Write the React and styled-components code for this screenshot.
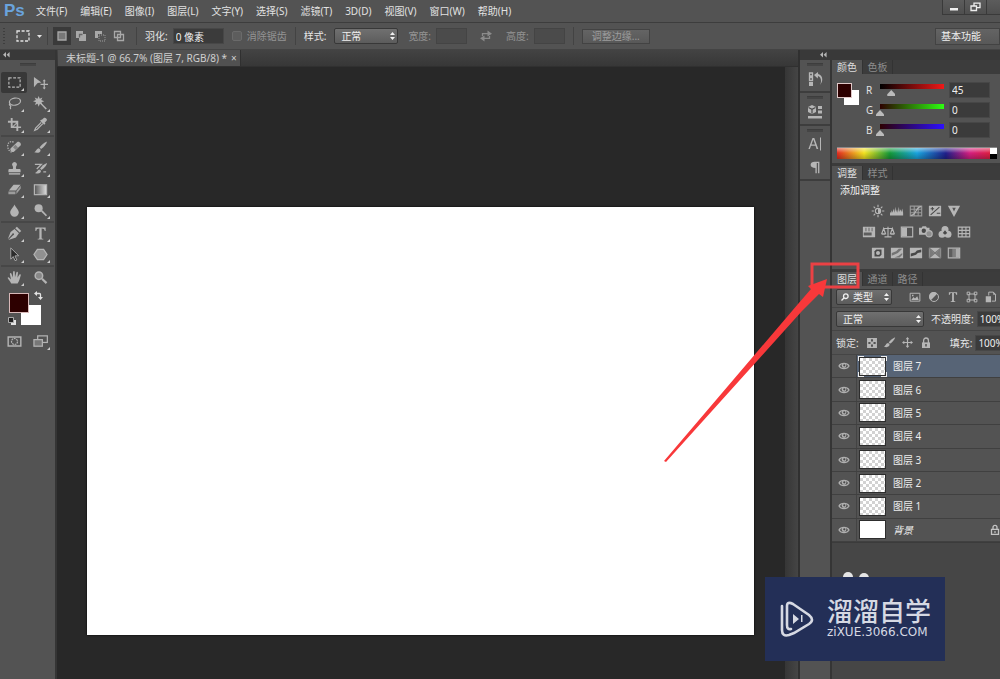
import React from 'react';
import styled, { createGlobalStyle, css } from 'styled-components';

const GlobalStyle = createGlobalStyle`
  * { box-sizing: border-box; }
  body {
    margin: 0;
    background: #444;
    color: #e2e2e2;
    font: 10px/14px "Noto Sans", "Noto Sans CJK SC", sans-serif;
  }
  button, input, select { font: inherit; color: inherit; margin: 0; padding: 0; border: 0; background: none; border-radius: 0; }
  ul { list-style: none; margin: 0; padding: 0; }
`;

/* ---------- icons ---------- */

const Svg = styled.svg`
  display: block;
  flex: none;
  width: ${p => p.$w || 16}px;
  height: ${p => p.$h || 16}px;
  fill: currentColor;
  stroke: none;
  .l { fill: none; stroke: currentColor; stroke-width: 1.3; }
  .d { fill: #484848; }
  .dl { fill: none; stroke: #484848; stroke-width: 1.2; }
`;

const Eye = () => (
  <Svg $w={12} $h={10} viewBox="0 0 12 10">
    <path className="l" d="M1 5C3 1.6 9 1.6 11 5C9 8.4 3 8.4 1 5Z" />
    <circle cx="6" cy="4.6" r="2.3" /><circle className="d" cx="6.3" cy="4.3" r="1.1" />
  </Svg>
);
const Lock = () => (
  <Svg $w={10} $h={12} viewBox="0 0 10 12">
    <path className="l" d="M2.6 6V3.4a2.4 2.4 0 0 1 4.8 0V6" />
    <path d="M1 5.4h8V11H1z" /><path className="d" d="M4.3 7h1.4v2.4H4.3z" />
  </Svg>
);
const OpenLock = () => (
  <Svg $w={10} $h={12} viewBox="0 0 10 12">
    <path className="l" d="M3 5V3.4a2 2 0 0 1 4 0V5M1.5 5.4h7v5h-7z" /><path d="M4.4 7h1.2v2H4.4z" />
  </Svg>
);
const Chevrons = () => (
  <Svg $w={7} $h={6} viewBox="0 0 7 6"><path d="M3 0v5.6L0 2.8zM6.6 0v5.6L3.6 2.8z" /></Svg>
);
const Swap = () => (
  <Svg $w={12} $h={12} viewBox="0 0 12 12">
    <path className="l" d="M2.500 6V3.700H8M9.500 6v2.300H4" /><path d="M7.500 .6L12 3.700 7.500 6.400zM4.500 5.600L0 8.300l4.500 3.100z" />
  </Svg>
);
const Marquee = () => (
  <Svg viewBox="0 0 16 16"><rect className="l" x="2" y="3" width="12" height="10" strokeDasharray="3 1.6" /></Svg>
);

const TOOLS = {
  marquee: <rect className="l" x="2" y="3" width="12" height="10" strokeDasharray="3 1.6" />,
  move: <><path d="M1 2l8 6-4 .4L1 13z" /><path className="l" d="M12 6v8M8 10h8" /><path d="M12 4.600l1.700 2h-3.400zM12 15.400l1.700-2h-3.400z" /></>,
  lasso: <><ellipse className="l" cx="8.500" cy="6" rx="6" ry="3.700" transform="rotate(-10 8.500 6)" /><path className="l" d="M3 8c-1.500 2 1.500 2 1 3.200S3 12.500 4 14" /></>,
  wand: <><path d="M6 0l1.200 3L10 1.500 8.800 4.300 12 5.500 9 6.600l1.200 2.900L7.400 8.200 6 11.500 4.900 8.300 2 9.500l1.200-2.900L0 5.500l3.100-1.200L1.800 1.500l3 1.400z" /><path d="M8.300 7l6.500 6.200-1.300 1.300L7.500 8z" /></>,
  crop: <path d="M4 1h2v3h6v6h3v1.800h-3V15h-2v-3.200H4V6H1V4h3zm2 5v3.900L9.800 6zm4.200 1.200L7.300 10h2.900z" />,
  dropper: <><path d="M9.500 3l2-2c1.600-1.200 4.300 1.300 3 3l-2 2 .8 1-1.300 1.200L7.500 4 8.700 2.800z" /><path className="l" d="M8.800 5.700l-6 6-1 2.600L4.500 13l6-6" /></>,
  heal: <><path d="M4 8.700l7-6.500c1.800-1.400 5 1.800 3.400 3.700l-7 6.500C5.500 13.800 2.400 10.700 4 8.700z" /><path className="d" d="M6.400 7.600l2.800 2.900 2.600-2.500-2.800-2.900z" opacity=".45" /><path className="l" d="M7 2.500C3.500 0 .3 3.500 .8 7c.3 3 1.500 5 4.200 6" strokeDasharray="1.500 1.200" /></>,
  brush: <><path d="M15 1.500c-3 1-6.500 4-8 6.500l1.600 1.500C11.500 7.500 14.500 4.500 15 1.500z" /><path d="M6.300 8.700l1.800 1.600c.2 3.500-4 4.200-7.100 2.600 2.500-.3 2.400-4 5.300-4.200z" /></>,
  stamp: <><path d="M8 1a2.700 2.700 0 0 1 2 4.400c-.7 1-.6 2-.2 3H13c1 0 1.500.6 1.500 1.200V12h-13V9.600c0-.7.5-1.200 1.500-1.200h3.200c.4-1 .5-2-.2-3A2.700 2.700 0 0 1 8 1z" /><path d="M2 13h12v1.500H2z" /></>,
  history: <><path d="M15 2c-3 1-6 3.500-7.500 6l1.500 1.500C12 7.500 14.500 5 15 2z" /><path d="M7 9l1.500 1.500c.2 3-3.500 3.700-6.500 2.200 2.300-.2 2.500-3.500 5-3.700z" /><path className="l" d="M2 3.500h7L4 8.500M11 11.500h3" /></>,
  eraser: <><path d="M7 3h7.500l-5 6H2z" /><path d="M1.500 10H9v3H1.500zM10 9.600l4.700-5.700v3L10 12.800z" opacity=".75" /></>,
  gradient: <><defs><linearGradient id="toolGradient"><stop stopColor="#555" /><stop offset="1" stopColor="#ddd" /></linearGradient></defs><rect className="l" x="1.500" y="3" width="13" height="10.500" style={{ fill: 'url(#toolGradient)' }} /></>,
  blur: <path d="M8 1.500c1 3 4.600 5.500 4.600 8.700A4.500 4.500 0 0 1 8 14.600a4.500 4.500 0 0 1-4.600-4.400C3.400 7 7 4.500 8 1.500z" />,
  dodge: <><circle cx="6" cy="5.500" r="4.300" /><path d="M8.500 9L10 7.700l5 5.300-1.300 1.200z" /></>,
  pen: <><path d="M10.500.8l4.700 4.400-1.700 1.700-4.700-4.400z" /><path d="M8 3.300l4.700 4.400-3.200 4.500L1.500 15l5-5.200a1 1 0 1 0-1-1L.8 14.200 3.800 6.500z" /></>,
  type: <path d="M2.500 1.500h11v3.700h-1c-.3-1.800-1-2.500-3.300-2.500v9.800c0 1 .6 1.200 1.800 1.200v.8H5v-.8c1.200 0 1.800-.2 1.800-1.200V2.700c-2.300 0-3 .7-3.300 2.500h-1z" />,
  select: <path d="M4 1l8.500 8.300-4 .2 2 4.300-1.900.8-2-4.400L4 13z" style={{ fill: '#2c2c2c', stroke: '#aaa' }} />,
  shape: <path className="l" d="M4.700 2.500h6.600L15 8l-3.700 5.500H4.700L1 8z" style={{ fill: '#909090' }} />,
  hand: <path d="M4.500 14.500C3.500 12 1.500 10.500.7 8.600c0-1 1.300-1 2 0l1.600 1.600L3 4.200c0-1.300 1.500-1.400 1.800-.2l1.400 4L6.500 2c.2-1.200 1.700-1.200 1.800 0l.2 5.600L10 2.600c.4-1.200 1.700-.9 1.700.3l-.6 5.300 2-3.200c.7-1 1.900-.4 1.600.7-1 3.500-1.700 6.200-3.400 8.800z" />,
  zoom: <><circle cx="6.300" cy="6" r="4" style={{ fill: '#888', stroke: 'currentColor', strokeWidth: 1.600 }} /><path d="M8.800 10l1.600-1.500 4.800 4.600-1.600 1.700z" /></>,
  mask: <><path d="M.5 2.500h15v11H.500zM2 4v8h12V4z" fillRule="evenodd" /><circle className="l" cx="8" cy="8" r="3.200" strokeDasharray="2 .8" /></>,
  screen: <><rect className="l" x="5" y="2" width="10.300" height="7" /><rect className="l" x="1" y="6" width="9" height="7" style={{ fill: '#777' }} /></>,
};

const ADJUST = {
  brightness: <><circle className="l" cx="8" cy="8" r="3" /><path d="M8 5a3 3 0 0 1 0 6z" /><path className="l" d="M8 .8v2.500M8 12.700v2.500M.8 8h2.500M12.700 8h2.500M3 3l1.700 1.700M11.300 11.300L13 13M13 3l-1.700 1.700M4.700 11.300L3 13" /></>,
  levels: <path d="M0 13v-3l1-1v2l1-4 1 3 1-5 1 5 1-7 1 6 1-3 1 4 1-7 1 6 1-3 1 3 1-4 1 5v3z" />,
  curves: <><path className="l" d="M1.500 2.500h13v11h-13zM6 2.500v11M10.500 2.500v11M1.500 6h13M1.500 10h13" strokeWidth="1" opacity=".7" /><path className="l" d="M2 13C9 13 7 3 14 3" /></>,
  exposure: <><path d="M1 2h14v12H1z" /><path className="dl" d="M13 3.500L3 12.500M3 5.500h4M10 10.500h4M5 3.500v4" /></>,
  vibrance: <path d="M1 2h14L8 14.800zm5 2.200L8 8.500l2-4.300z" fillRule="evenodd" />,
  hue: <><path d="M1 2h14v12H1z" /><path className="d" d="M4 3h1v4H4zM7.500 3h1v4h-1zM11 3h1v4h-1zM2 8.500h9v3.500H2z" opacity=".8" /></>,
  balance: <path className="l" d="M8 2v11M4 13.500h8M3 4h10M3 4L.8 10h4.400zM13 4l-2.200 6h4.400zM1 10.500h4M11 10.500h4" />,
  bw: <><path className="l" d="M1.500 2.500h13v11h-13z" /><path d="M2 3h6v10H2z" /></>,
  photo: <><path d="M0 3h3l1-1.500h4L9 3h3v8H0z" /><circle className="d" cx="5.500" cy="6.500" r="2.500" /><circle className="l" cx="11.500" cy="10" r="3.600" style={{ fill: '#8f8f8f' }} /></>,
  mixer: <><circle cx="8" cy="5" r="4" /><circle cx="4.600" cy="10.500" r="4" /><circle cx="11.400" cy="10.500" r="4" /><path className="d" d="M8 6l2.500 3L8 11 5.500 9z" /></>,
  lookup: <path className="l" d="M1.500 2.500h13v11h-13zM5.800 2.500v11M10.200 2.500v11M1.500 6.200h13M1.500 9.800h13" />,
  invert: <><path d="M1 2h14v12H1z" /><path className="d" d="M12 4v6l-2 2H4V6l2-2z" /><circle cx="8" cy="8" r="2.300" /></>,
  posterize: <><path d="M1 2h14v12H1z" /><path className="d" d="M2 8l5-2 3-3h4L9 8l-7 3zM5 13l5-2 4-3v2l-3 3z" opacity=".6" /></>,
  threshold: <><path d="M1 2h14v12H1z" /><path className="d" d="M2 8.500l5-1 2-2.500 5-1v3l-4 1-2 2-6 2z" /></>,
  selective: <><path d="M1 2h14v12H1z" /><path className="d" d="M1.500 3L7 8l-5.500 5zM14.500 3L9 8l5.500 5z" opacity=".55" /><path className="dl" d="M1.500 2.500l13 11M14.500 2.500l-13 11" opacity=".6" /></>,
  map: <><path className="l" d="M1.500 2.500h13v11h-13z" /><path d="M2 3h4v10H2z" opacity=".1" /><path d="M6 3h4v10H6z" opacity=".45" /><path d="M10 3h4v10h-4z" opacity=".9" /></>,
};

const FILTERS = [
  ['像素图层', <><path className="l" d="M1.500 3h13v10.500h-13z" /><path d="M3 12l3-4 2 2 3-3 2 5zM4 5h2v2H4z" /></>],
  ['调整图层', <><circle className="l" cx="8" cy="8" r="6" /><path d="M12.200 3.800A6 6 0 1 0 3.800 12.200z" /></>],
  ['文字图层', TOOLS.type],
  ['形状图层', <path className="l" d="M4 4h8v8H4zM1.500 1.500H5V5H1.500zM11 1.500h3.500V5H11zM1.500 11H5v3.500H1.500zM11 11h3.500v3.500H11z" />],
  ['智能对象', <><path className="l" d="M5 6V1.500h6l3 3v9H9" /><path d="M1 7h7v8H1zM11 1v4h4z" /></>],
];

/* ---------- shared controls ---------- */

const SelectBox = styled.span`
  position: relative;
  display: flex;
  flex: none;
  width: ${p => p.$w}px;
  height: 16px;
  color: #f0f0f0;
  > svg { position: absolute; right: 3px; top: 4px; pointer-events: none; }
`;
const NativeSelect = styled.select`
  appearance: none;
  width: 100%;
  padding-left: ${p => (p.$search ? 16 : 6)}px;
  border: 1px solid #383838;
  border-radius: 2px;
  background: linear-gradient(#707070, #5c5c5c);
  line-height: 14px;
`;
const SearchGlyph = styled.span`
  position: absolute;
  left: 5px;
  top: 4px;
`;
const Select = ({ w, label, value, search }) => (
  <SelectBox $w={w}>
    <NativeSelect aria-label={label} defaultValue={value} $search={search}>
      <option>{value}</option>
    </NativeSelect>
    {search && (
      <SearchGlyph><Svg $w={8} $h={8} viewBox="0 0 8 8"><circle className="l" cx="4.800" cy="3.200" r="2.300" /><path className="l" d="M3.200 4.800L.5 7.500" /></Svg></SearchGlyph>
    )}
    <Svg $w={5} $h={8} viewBox="0 0 5 8"><path d="M2.500 0L5 3H0zM2.500 8L0 5h5z" /></Svg>
  </SelectBox>
);

const Field = styled.input`
  flex: none;
  width: ${p => p.$w}px;
  height: 16px;
  padding-left: 2px;
  background: #3b3b3b;
  border: 1px solid #474747;
  color: #efefef;
  &:disabled { background: #4b4b4b; border-color: #444; }
`;
const Divider = styled.span`
  flex: none;
  width: 1px;
  height: 18px;
  margin: 0 ${p => p.$m || 8}px;
  background: #434343;
`;
const IconButton = styled.button`
  display: grid;
  place-items: center;
  flex: none;
  width: ${p => p.$w || 19}px;
  height: ${p => p.$h || 21}px;
  color: #b6b6b6;
`;

/* ---------- menu and options bars ---------- */

const Window = styled.div`
  position: relative;
  display: flex;
  flex-direction: column;
  min-height: 100vh;
  overflow: hidden;
`;
const MenuBar = styled.header`
  display: flex;
  align-items: flex-start;
  height: 23px;
  background: #535353;
  border-bottom: 1px solid #3d3d3d;
  overflow: hidden;
`;
const Logo = styled.strong`
  width: 30px;
  padding-left: 4px;
  color: #6aa3dc;
  font: bold 17px/22px "Liberation Sans", sans-serif;
`;
const Menus = styled.nav`
  display: flex;
  flex: 1;
  gap: 1px;
  button { padding: 4px 6px; white-space: nowrap; }
`;
const WindowButtons = styled.div`
  display: flex;
  color: #eee;
  button { width: 22px; height: 15px; display: grid; place-items: center; border: 1px solid #3a3a3a; border-width: 0 0 1px 1px; background: linear-gradient(#5c5c5c, #4f4f4f); }
  button:last-child { width: 14px; }
`;
const OptionsBar = styled.section`
  display: flex;
  align-items: center;
  height: 27px;
  padding-left: 3px;
  background: #535353;
  border-bottom: 1px solid #444;
  white-space: nowrap;
  overflow: hidden;
`;
const Grip = styled.span`
  flex: none;
  width: 2px;
  height: 16px;
  margin-right: 10px;
  background: repeating-linear-gradient(#3e3e3e 0 1px, #535353 1px 3px);
`;
const Modes = styled.div`
  display: flex;
  gap: 1px;
  color: #a8a8a8;
  button { width: 18px; height: 18px; display: grid; place-items: center; }
  button:first-child { background: #3a3a3a; }
`;
const Caption = styled.label`
  display: flex;
  align-items: center;
  gap: ${p => p.$gap || 5}px;
  color: ${p => (p.$dim ? '#939393' : '#e6e6e6')};
`;
const Check = styled.input`
  appearance: none;
  width: 10px;
  height: 10px;
  border: 1px solid #6a6a6a;
  border-radius: 2px;
  background: #5d5d5d;
`;
const SwapSlot = styled.span`
  padding: 0 14px 0 13px;
  color: #8b8b8b;
`;
const RaisedButton = styled.button`
  flex: none;
  width: ${p => p.$w}px;
  height: ${p => p.$h || 15}px;
  border: 1px solid #434343;
  background: linear-gradient(#646464, #585858);
  color: ${p => (p.$dim ? '#9c9c9c' : '#f0f0f0')};
  line-height: 12px;
  text-align: ${p => (p.$dim ? 'center' : 'left')};
  padding-left: ${p => (p.$dim ? 0 : 5)}px;
`;
const Spacer = styled.span`flex: 1;`;

/* ---------- toolbox ---------- */

const Body = styled.main`
  display: flex;
  flex: 1;
`;
const Collapse = styled.div`
  display: flex;
  align-items: center;
  justify-content: ${p => p.$end ? 'flex-end' : 'flex-start'};
  height: 10px;
  padding: 0 3px;
  background: #393939;
  color: #b5b5b5;
`;
const Toolbox = styled.aside`
  flex: none;
  width: 57px;
  background: #535353;
  border-right: 2px solid #353535;
`;
const GripBar = styled.div`
  width: 16px;
  height: 3px;
  margin: 3px auto ${p => p.$mb || 0}px;
  background: #454545;
  border-top: 1px solid #3d3d3d;
`;
const ToolGroup = styled.div`
  display: grid;
  grid-template-columns: 26px 26px;
  margin: 0 1px;
  border-bottom: ${p => (p.$last ? 0 : 2)}px solid #474747;
`;
const Tool = styled.button`
  position: relative;
  display: grid;
  place-items: center;
  height: 21px;
  color: #b4b4b4;
  border-radius: 2px;
  ${p => p.$active && css`background: #383838;`}
  ${p => p.$more && css`
    &::after { content: ""; position: absolute; right: 3px; bottom: 2px; border: solid transparent; border-width: 0 0 3px 3px; border-bottom-color: #ccc; }
  `}
`;
const Swatches = styled.div`
  position: relative;
  height: 40px;
  margin: 3px 0 0 7px;
  svg { position: absolute; }
  .swap { left: 27px; top: 0; }
  .reset { left: 1px; top: 26px; }
`;
const Chip = styled.span`
  position: absolute;
  width: ${p => p.$s}px;
  height: ${p => p.$s}px;
  left: ${p => p.$x}px;
  top: ${p => p.$x}px;
  background: ${p => p.$c};
  border: 1px solid ${p => p.$edge || '#fff'};
`;

/* ---------- document ---------- */

const Doc = styled.section`
  flex: 1;
  min-width: 0;
  display: flex;
  flex-direction: column;
  border-right: 2px solid #303030;
`;
const TabStrip = styled.div`
  display: flex;
  height: 17px;
  padding-left: 1px;
  background: linear-gradient(#434343, #373737);
  border-bottom: 1px solid #303030;
`;
const DocTab = styled.div`
  display: flex;
  align-items: center;
  gap: 4px;
  padding: 0 3px 0 8px;
  background: #515151;
  color: #cfcfcf;
  white-space: nowrap;
  border-right: 1px solid #303030;
`;
const Pasteboard = styled.div`
  flex: 1;
  display: flex;
  background: #282828;
`;
const PageArea = styled.div`
  flex: 1;
  display: flex;
  padding: 140px 31px 44px 30px;
`;
const Page = styled.div`
  flex: 1;
  background: #fff;
  box-shadow: 0 0 2px #000;
`;
const ScrollTrack = styled.div`
  width: 13px;
  background: linear-gradient(90deg, #363636, #454545);
`;

/* ---------- dock and panels ---------- */

const Dock = styled.aside`
  display: flex;
  flex: none;
  flex-direction: column;
  width: 200px;
  background: #464646;
`;
const DockHead = styled.div`
  background: #393939;
  > div { width: 30px; }
`;
const DockRow = styled.div`
  display: flex;
  flex: 1;
`;
const IconColumn = styled.div`
  width: 30px;
  background: #535353;
`;
const DockGroup = styled.div`
  display: flex;
  flex-direction: column;
  align-items: center;
  height: ${p => p.$h}px;
  border-bottom: 2px solid #3d3d3d;
`;
const Panels = styled.div`
  width: 170px;
  border-left: 2px solid #353535;
  overflow: hidden;
`;
const Panel = styled.section`
  background: #535353;
  border-bottom: ${p => p.$edge || 3}px solid #3b3b3b;
  overflow: hidden;
  ${p => p.$h && css`height: ${p.$h}px;`}
`;
const PanelTabs = styled.div`
  display: flex;
  height: 14px;
  background: #3c3c3c;
  button { width: 30px; color: #8d8d8d; line-height: 14px; border-right: 1px solid #333; }
  button:first-child { width: 31px; background: #535353; color: #dedede; }
`;
const ColorBody = styled.div`
  display: flex;
  height: 73px;
  padding: 6px 0 0 4px;
`;
const ChipPair = styled.div`
  position: relative;
  width: 30px;
  margin-top: 2px;
`;
const Channel = styled.label`
  display: flex;
  align-items: center;
  height: 20px;
  > span { width: 9px; }
`;
const Slider = styled.input`
  appearance: none;
  width: 72px;
  height: 14px;
  margin: 0 1px;
  background: linear-gradient(90deg, ${p => p.$from}, ${p => p.$to}) 4px 1px / 64px 5px no-repeat;
  &::-webkit-slider-runnable-track { height: 14px; }
  &::-webkit-slider-thumb { appearance: none; width: 8px; height: 6px; margin-top: 7px; background: #bbb; clip-path: polygon(50% 0, 100% 70%, 100% 100%, 0 100%, 0 70%); }
`;
const Spectrum = styled.div`
  display: flex;
  height: 12px;
  margin: 0 3px 0 5px;
  border-top: 1px solid #888;
  background:
    linear-gradient(rgba(255,255,255,.5), transparent 45%, rgba(0,0,0,.25)),
    linear-gradient(90deg, #e22b20, #f2e321 17%, #159a38 33%, #1aa4df 50%, #20208c 68%, #d51f80 83%, #e2202c);
  &::after { content: ""; width: 7px; margin-left: auto; background: linear-gradient(#fff 50%, #000 50%); }
`;
const AdjustTitle = styled.div`
  padding: 3px 8px;
  color: #f2f2f2;
`;
const AdjustRow = styled.div`
  display: flex;
  justify-content: center;
`;
const PanelRow = styled.div`
  display: flex;
  align-items: center;
  height: ${p => p.$h || 23}px;
  padding-left: 4px;
  white-space: nowrap;
  border-bottom: 1px solid #454545;
  overflow: hidden;
`;
const Push = styled.div`
  display: flex;
  flex: none;
  margin-left: ${p => p.$m}px;
`;
const LayerList = styled.ul`
  display: grid;
  grid-template-rows: repeat(8, 1fr);
  height: 187px;
`;
const Layer = styled.li`
  display: flex;
  align-items: center;
  border-bottom: 1px solid #404040;
  background: ${p => (p.$active ? 'linear-gradient(90deg, #535353 25px, #576476 25px)' : '#535353')};
  color: #ececec;
  font-style: ${p => (p.$italic ? 'italic' : 'normal')};
`;
const EyeCell = styled.button`
  display: grid;
  place-items: center;
  width: 25px;
  align-self: stretch;
  border-right: 1px solid #434343;
  color: #b0b0b0;
`;
const bracketX = 'linear-gradient(90deg, #eee 6px, transparent 6px calc(100% - 6px), #eee calc(100% - 6px))';
const bracketY = 'linear-gradient(#eee 5px, transparent 5px calc(100% - 5px), #eee calc(100% - 5px))';
const Thumb = styled.span`
  position: relative;
  width: 27px;
  height: 19px;
  margin: 0 7px 0 2px;
  border: 1px solid #2d2d2d;
  background: ${p => (p.$solid ? '#fff' : 'repeating-conic-gradient(#d2d2d2 0 25%, #fff 0 50%) 0 0 / 6px 6px')};
  ${p => p.$active && css`
    &::after {
      content: "";
      position: absolute;
      inset: -2px;
      background:
        ${bracketX} 0 0 / 100% 1px no-repeat, ${bracketX} 0 100% / 100% 1px no-repeat,
        ${bracketY} 0 0 / 1px 100% no-repeat, ${bracketY} 100% 0 / 1px 100% no-repeat;
    }
  `}
`;
const LayerLock = styled.span`
  margin: 0 0 0 auto;
  color: #c4c4c4;
`;

/* ---------- overlays ---------- */

const Pointer = styled.svg`
  position: absolute;
  top: 255px;
  right: 130px;
  width: 210px;
  height: 215px;
  pointer-events: none;
`;
const Watermark = styled.div`
  position: absolute;
  right: 55px;
  bottom: 18px;
  display: flex;
  align-items: center;
  width: 180px;
  height: 84px;
  padding-left: 14px;
  gap: 12px;
  background: #232f57;
  color: #d6d9e3;
`;
const WatermarkName = styled.div`
  font: 500 26px/26px "Liberation Sans", "Noto Sans CJK SC", sans-serif;
`;
const WatermarkUrl = styled.div`
  font: 12px/14px "DejaVu Sans", sans-serif;
`;
const Dots = styled.svg`
  position: absolute;
  left: 77px;
  top: -5px;
  width: 28px;
  height: 5px;
`;

const MENUS = ['文件(F)', '编辑(E)', '图像(I)', '图层(L)', '文字(Y)', '选择(S)', '滤镜(T)', '3D(D)', '视图(V)', '窗口(W)', '帮助(H)'];
const GROUPS = [
  ['marquee', 'move', 'lasso', 'wand', 'crop', 'dropper'],
  ['heal', 'brush', 'stamp', 'history', 'eraser', 'gradient', 'blur', 'dodge'],
  ['pen', 'type', 'select', 'shape'],
  ['hand', 'zoom'],
];
const CHANNELS = [['R', 45, '#000', '#f01818'], ['G', 0, '#2d0000', '#2dff10'], ['B', 0, '#2d0000', '#2d10ff']];
const ADJUST_ROWS = [
  ['brightness', 'levels', 'curves', 'exposure', 'vibrance'],
  ['hue', 'balance', 'bw', 'photo', 'mixer', 'lookup'],
  ['invert', 'posterize', 'threshold', 'selective', 'map'],
];
const LAYERS = ['图层 7', '图层 6', '图层 5', '图层 4', '图层 3', '图层 2', '图层 1', '背景'];
const MODES = [
  ['新选区', <path className="l" d="M2 2h8v8H2z" style={{ fill: '#777' }} />],
  ['添加到选区', <><path d="M1 1h7v3h3v7H4V8H1z" /><path className="l" d="M4.500 7.500v-3h3" style={{ stroke: '#666' }} /></>],
  ['从选区减去', <><path d="M1 1h7v3H4v4H1z" /><path className="l" d="M5 5h6v6H5z" strokeDasharray="1 1" opacity=".6" /></>],
  ['与选区交叉', <><path className="l" d="M1.500 1.500h6v6h-6zM4.500 4.500h6v6h-6z" /></>],
];

const ToolIcon = ({ name, set = TOOLS, size = 15 }) => (
  <Svg $w={size} $h={size} viewBox="0 0 16 16">{set[name]}</Svg>
);

export default function App() {
  return (
    <Window>
      <GlobalStyle />
      <MenuBar>
        <Logo>Ps</Logo>
        <Menus>{MENUS.map(m => <button key={m}>{m}</button>)}</Menus>
        <WindowButtons>
          <button aria-label="最小化"><Svg $w={10} $h={10} viewBox="0 0 10 10"><path d="M1 6h8v2.500H1z" /></Svg></button>
          <button aria-label="还原"><Svg $w={11} $h={10} viewBox="0 0 11 10"><path className="l" d="M4 1.200h6v4.500H4z" strokeWidth="1.800" /><path className="l" d="M1 4h5.500v4.500H1z" style={{ fill: '#555' }} /></Svg></button>
          <button aria-label="关闭" />
        </WindowButtons>
      </MenuBar>

      <OptionsBar>
        <Grip />
        <Marquee />
        <Push $m={6}><Svg $w={5} $h={3} viewBox="0 0 5 3"><path d="M0 0h5L2.500 3z" /></Svg></Push>
        <Divider $m={5} />
        <Modes>
          {MODES.map(([label, art]) => (
            <button key={label} aria-label={label}><Svg $w={12} $h={12} viewBox="0 0 12 12">{art}</Svg></button>
          ))}
        </Modes>
        <Divider />
        <Caption>羽化: <Field $w={51} defaultValue="0 像素" /></Caption>
        <Push $m={8}><Caption $dim><Check type="checkbox" disabled />消除锯齿</Caption></Push>
        <Divider />
        <Caption $gap={8}>样式: <Select w={64} label="样式" value="正常" /></Caption>
        <Push $m={10}><Caption $dim>宽度: <Field $w={31} disabled /></Caption></Push>
        <SwapSlot><Swap /></SwapSlot>
        <Caption $dim>高度: <Field $w={31} disabled /></Caption>
        <Divider />
        <RaisedButton $w={68} $dim disabled>调整边缘...</RaisedButton>
        <Spacer />
        <RaisedButton $w={65} $h={17}>基本功能</RaisedButton>
      </OptionsBar>

      <Body>
        <Toolbox>
          <Collapse><Chevrons /></Collapse>
          <GripBar $mb={6} />
          {GROUPS.map((group, i) => (
            <ToolGroup key={group[0]} $last={i === 3}>
              {group.map(name => (
                <Tool key={name} aria-label={name} $active={name === 'marquee'} $more={name !== 'move' && name !== 'zoom'}>
                  <ToolIcon name={name} />
                </Tool>
              ))}
            </ToolGroup>
          ))}
          <Swatches>
            <Chip $s={20} $x={14} $c="#fff" />
            <Chip $s={20} $x={2} $c="#2d0000" $edge="#d8b8b8" />
            <Svg className="swap" $w={9} $h={9} viewBox="0 0 9 9"><path className="l" d="M2 2.500h3.500q1 0 1 1V7" /><path d="M3 0v5L0 2.500zM4 6h5L6.500 9z" /></Svg>
            <Svg className="reset" $w={8} $h={8} viewBox="0 0 8 8"><path d="M3 3h5v5H3z" /><path d="M.5.5h5v5h-5z" style={{ fill: '#222', stroke: '#aaa' }} /></Svg>
          </Swatches>
          <ToolGroup $last>
            <Tool aria-label="mask"><ToolIcon name="mask" /></Tool>
            <Tool aria-label="screen" $more><ToolIcon name="screen" /></Tool>
          </ToolGroup>
        </Toolbox>

        <Doc>
          <TabStrip>
            <DocTab>未标题-1 @ 66.7% (图层 7, RGB/8) * <span>×</span></DocTab>
          </TabStrip>
          <Pasteboard>
            <PageArea><Page /></PageArea>
            <ScrollTrack />
          </Pasteboard>
        </Doc>

        <Dock>
          <DockHead><Collapse $end><Chevrons /></Collapse></DockHead>
          <DockRow>
            <IconColumn>
              <DockGroup $h={33}>
                <GripBar />
                <IconButton $h={25} aria-label="历史记录"><Svg viewBox="0 0 16 16"><path className="l" d="M2.500 2h3v3h-3zM2.500 6.500h3v3h-3z" /><path d="M2 11h4v4H2z" /><path d="M13 14c2-4 1-8-2-9l-.3 2.500L7 4l4-3 .1 2C16 4 16.500 10 13 14z" /></Svg></IconButton>
              </DockGroup>
              <DockGroup $h={33}>
                <GripBar />
                <IconButton $h={25} aria-label="属性"><Svg viewBox="0 0 16 16"><path d="M5 1l4 2v5l-4 2-4-2V3z" /><path className="dl" d="M1.500 3.500L5 5.300l3.500-1.800M5 5.300V9.500" /><path d="M11 2h4v3h-4zM11 6.500h4v3h-4zM1 12h14v2.500H1z" /></Svg></IconButton>
              </DockGroup>
              <DockGroup $h={55}>
                <GripBar />
                <IconButton $h={24} aria-label="字符"><Svg viewBox="0 0 16 16"><path d="M5.500 2h1.800l4 11H9.600L8.500 9.800H4L2.900 13H1.400zM4.500 8.500h3.600L6.300 3.600z" fillRule="evenodd" /><path d="M13 1.500h1v13h-1z" /></Svg></IconButton>
                <IconButton aria-label="段落"><Svg $w={14} $h={14} viewBox="0 0 16 16"><path d="M13 2v13h-1.500V3.500H10V15H8.500V9C5 9 3 8 3 5.500S5 2 7.500 2z" /></Svg></IconButton>
              </DockGroup>
            </IconColumn>

            <Panels>
              <Panel $h={106}>
                <PanelTabs><button>颜色</button><button>色板</button></PanelTabs>
                <ColorBody>
                  <ChipPair>
                    <Chip $s={15} $x={8} $c="#fff" />
                    <Chip $s={15} $x={1} $c="#2d0000" $edge="#e0c8c8" />
                  </ChipPair>
                  <div>
                    {CHANNELS.map(([name, value, from, to]) => (
                      <Channel key={name}>
                        <span>{name}</span>
                        <Slider type="range" min="0" max="255" defaultValue={value} $from={from} $to={to} aria-label={name} />
                        <Field $w={41} defaultValue={value} aria-label={name + ' 值'} />
                      </Channel>
                    ))}
                  </div>
                </ColorBody>
                <Spectrum />
              </Panel>

              <Panel $h={106}>
                <PanelTabs><button>调整</button><button>样式</button></PanelTabs>
                <AdjustTitle>添加调整</AdjustTitle>
                {ADJUST_ROWS.map(row => (
                  <AdjustRow key={row[0]}>
                    {row.map(name => (
                      <IconButton key={name} $h={21} aria-label={name}><ToolIcon name={name} set={ADJUST} size={14} /></IconButton>
                    ))}
                  </AdjustRow>
                ))}
              </Panel>

              <Panel $edge={1}>
                <PanelTabs><button>图层</button><button>通道</button><button>路径</button></PanelTabs>
                <PanelRow $h={22}>
                  <Select w={56} label="筛选" value="类型" search />
                  <Push $m={13}>
                    {FILTERS.map(([label, art]) => (
                      <IconButton key={label} aria-label={label}><Svg $w={12} $h={12} viewBox="0 0 16 16">{art}</Svg></IconButton>
                    ))}
                  </Push>
                </PanelRow>
                <PanelRow>
                  <Select w={88} label="混合模式" value="正常" />
                  <Push $m={7}><Caption $gap={3}>不透明度: <Field $w={50} defaultValue="100%" /></Caption></Push>
                </PanelRow>
                <PanelRow $h={24}>
                  锁定:
                  <Push $m={4}>
                    <IconButton $w={18} aria-label="锁定透明像素"><Svg $w={10} $h={10} viewBox="0 0 10 10"><path className="l" d="M.7.7h8.600v8.600H.7z" /><path d="M1 1h3v3H1zM6 1h3v3H6zM3.500 3.500h3v3h-3zM1 6h3v3H1zM6 6h3v3H6z" /></Svg></IconButton>
                    <IconButton $w={18} aria-label="锁定图像像素"><ToolIcon name="brush" size={13} /></IconButton>
                    <IconButton $w={18} aria-label="锁定位置"><Svg $w={11} $h={11} viewBox="0 0 12 12"><path className="l" d="M6 2v8M2 6h8" /><path d="M6 0l2 2.500H4zM6 12l2-2.500H4zM0 6l2.500-2v4zM12 6L9.500 4v4z" /></Svg></IconButton>
                    <IconButton $w={18} aria-label="全部锁定"><Lock /></IconButton>
                  </Push>
                  <Push $m={15}><Caption $gap={3}>填充: <Field $w={50} defaultValue="100%" /></Caption></Push>
                </PanelRow>
                <LayerList>
                  {LAYERS.map((name, i) => (
                    <Layer key={name} $active={i === 0} $italic={i === 7}>
                      <EyeCell aria-label={'显示 ' + name}><Eye /></EyeCell>
                      <Thumb $solid={i === 7} $active={i === 0} />
                      {name}
                      {i === 7 && <LayerLock><OpenLock /></LayerLock>}
                    </Layer>
                  ))}
                </LayerList>
              </Panel>
            </Panels>
          </DockRow>
        </Dock>
      </Body>

      <Pointer viewBox="660 255 210 215">
        <rect x="812" y="264" width="46" height="23" fill="none" stroke="#ea4144" strokeWidth="3" />
        <path d="M664 461L798 304 811 289 808 286 827 279 823 297 819 294 802 311 666 462Z" fill="#f8383a" />
      </Pointer>

      <Watermark>
        <Dots viewBox="0 0 28 5"><circle cx="6" cy="5" r="5" fill="#e5e5e5" /><circle cx="22" cy="6" r="5" fill="#e5e5e5" /></Dots>
        <Svg $w={36} $h={38} viewBox="0 0 36 38">
          <path d="M3 6v24q0 7 7 5l5-2 15-9q6-4 0-9L14 4Q8 1 8 6v19q0 5 4 4" fill="none" stroke="currentColor" strokeWidth="2.600" strokeLinecap="round" />
          <path d="M14 14l6 5-6 5zM22 15h1.500v7H22z" />
        </Svg>
        <div>
          <WatermarkName>溜溜自学</WatermarkName>
          <WatermarkUrl>ziXUE.3066.COM</WatermarkUrl>
        </div>
      </Watermark>
    </Window>
  );
}
